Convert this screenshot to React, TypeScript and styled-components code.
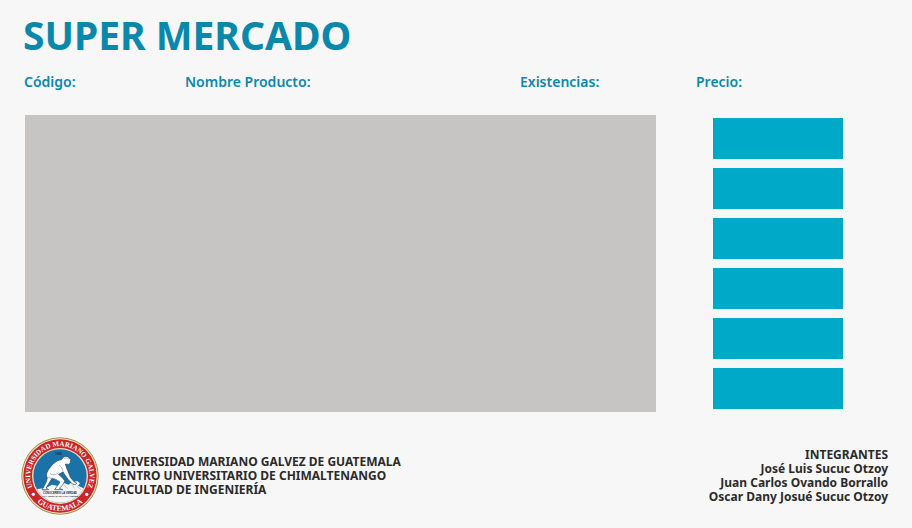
import React from "react";
import styled, { createGlobalStyle } from "styled-components";

const GlobalStyle = createGlobalStyle`
  * { box-sizing: border-box; }
  body {
    margin: 0;
    background: #f7f7f7;
    font-family: "Noto Sans", "Open Sans", sans-serif;
  }
`;

const Page = styled.div`
  display: flex;
  flex-direction: column;
  min-height: 100vh;
  padding: 12px 24px 12px;
`;

const Title = styled.h1`
  margin: 0 0 0 -1px;
  font-size: 39px;
  line-height: 46px;
  font-weight: 700;
  color: #0a88ac;
`;

const Fields = styled.form`
  display: grid;
  grid-template-columns: minmax(0, 161fr) minmax(0, 335fr) minmax(0, 176fr) minmax(0, 192fr);
  margin-top: 14px;
`;

const Field = styled.div`
  display: flex;
  align-items: center;
  gap: 8px;
  min-width: 0;
`;

const FieldLabel = styled.label`
  flex: none;
  font-size: 14px;
  line-height: 20px;
  font-weight: 600;
  color: #0a88ac;
`;

const FieldInput = styled.input`
  flex: 1;
  min-width: 0;
  width: 0;
  height: 20px;
  padding: 0;
  border: 0;
  outline: 0;
  background: transparent;
  font: inherit;
  font-size: 14px;
  color: #2b2b2b;
`;

const Content = styled.main`
  display: flex;
  flex: 1;
  gap: 57px;
  margin-top: 23px;
  padding: 0 45px 0 1px;
`;

const ProductPanel = styled.section`
  flex: 1;
  min-height: 240px;
  background: #c6c5c3;
`;

const Actions = styled.div`
  display: grid;
  grid-auto-rows: 1fr;
  gap: 9px;
  flex: 0 0 130px;
  padding: 3px 0;
`;

const ActionButton = styled.button`
  padding: 0;
  border: 0;
  background: #00a9c8;
  cursor: pointer;
`;

const Footer = styled.footer`
  display: flex;
  align-items: center;
  margin-top: 24px;
`;

const Seal = styled.svg`
  display: block;
  flex: none;
  width: 80px;
  height: 80px;
  margin: 0 12px 0 -4px;
`;

const Institution = styled.address`
  font-style: normal;
  font-size: 12px;
  line-height: 14px;
  font-weight: 700;
  color: #2b2b2b;
`;

const Members = styled(Institution)`
  margin-left: auto;
  text-align: right;
`;

const Line = styled.div``;

const fields = [
  { id: "codigo", label: "Código:" },
  { id: "nombre", label: "Nombre Producto:" },
  { id: "existencias", label: "Existencias:" },
  { id: "precio", label: "Precio:" },
];

const actions = [1, 2, 3, 4, 5, 6];

const institution = [
  "UNIVERSIDAD MARIANO GALVEZ DE GUATEMALA",
  "CENTRO UNIVERSITARIO DE CHIMALTENANGO",
  "FACULTAD DE INGENIERÍA",
];

const members = [
  "INTEGRANTES",
  "José Luis Sucuc Otzoy",
  "Juan Carlos Ovando Borrallo",
  "Oscar Dany Josué Sucuc Otzoy",
];

function UniversitySeal() {
  return (
    <Seal viewBox="-120 -120 240 240" role="img" aria-label="Universidad Mariano Galvez">
      <defs>
        <path id="seal-top" d="M -67 58 A 89 89 0 1 1 67 58" />
        <path id="seal-bottom" d="M -89 54 A 104 104 0 0 0 89 54" />
        <clipPath id="seal-disc">
          <circle r="80" />
        </clipPath>
      </defs>
      <circle r="116" fill="#a98f4c" />
      <circle r="113" fill="#f4e6c8" />
      <circle r="110" fill="#cb2429" />
      <circle r="84" fill="#f3dfc0" />
      <circle r="80" fill="#1b72a8" />
      <g clipPath="url(#seal-disc)">
        <path
          d="M -82 44 L -62 38 L -42 36 L -24 26 L -6 30 L 10 20 L 25 26 L 38 18 L 52 15 L 60 22 L 54 29 L 74 38 L 82 50 L 70 90 L -70 90 Z"
          fill="#f5f5f3"
        />
        <path
          d="M -54 41 L -40 45 M 12 28 L 23 38 M 36 27 L 45 38 M 51 31 L 63 41"
          stroke="#9fb2bd"
          strokeWidth="2"
        />
      </g>
      <path
        d="M 8 -53 C 12 -61 26 -61 30 -51 L 36 -49 L 31 -46 C 33 -39 28 -34 21 -35 L 16 -36 L 20 -24 L 26 -9 L 32 5 L 42 17 L 50 21 L 47 26 L 37 24 L 25 11 L 15 -3 L 9 -12 L -4 -5 L 8 7 L 15 15 L 6 29 L -2 37 L 8 41 L -16 41 L -11 34 L 0 18 L -14 10 L -24 7 L -32 20 L -42 36 L -34 41 L -54 41 L -49 33 L -41 17 L -38 5 C -44 -4 -38 -14 -31 -24 C -21 -38 -8 -48 4 -49 Z"
        fill="#ffffff"
        stroke="#17435f"
        strokeWidth="2"
        strokeLinejoin="round"
      />
      <path
        d="M -30 -8 C -21 0 -12 -4 -4 -10 M 12 -51 C 16 -56 24 -55 27 -50 M -35 5 L -20 7 L 0 17 M -2 -32 C 4 -28 8 -22 9 -13"
        fill="none"
        stroke="#8195a2"
        strokeWidth="2"
      />
      <g fontFamily="Liberation Serif, serif" fontWeight="700" fill="#ffffff" textAnchor="middle">
        <text fontSize="21">
          <textPath href="#seal-top" startOffset="50%">UNIVERSIDAD MARIANO GALVEZ</textPath>
        </text>
        <text fontSize="23">
          <textPath href="#seal-bottom" startOffset="50%">GUATEMALA</textPath>
        </text>
      </g>
      <g fontFamily="Liberation Sans, sans-serif" fontWeight="700" fill="#1d2d38" textAnchor="middle">
        <text y="-62" x="-4" fontSize="9">1966</text>
        <text y="53" fontSize="8">CONOCEREIS LA VERDAD</text>
        <text y="64" fontSize="7">Y LA VERDAD OS HARA LIBRES</text>
      </g>
      <circle cx="-80" cy="55" r="5" fill="#ffffff" />
      <circle cx="80" cy="55" r="5" fill="#ffffff" />
    </Seal>
  );
}

export default function App() {
  return (
    <>
      <GlobalStyle />
      <Page>
        <Title>SUPER MERCADO</Title>
        <Fields>
          {fields.map((field) => (
            <Field key={field.id}>
              <FieldLabel htmlFor={field.id}>{field.label}</FieldLabel>
              <FieldInput id={field.id} type="text" />
            </Field>
          ))}
        </Fields>
        <Content>
          <ProductPanel aria-label="Productos" />
          <Actions>
            {actions.map((action) => (
              <ActionButton key={action} type="button" aria-label={`Acción ${action}`} />
            ))}
          </Actions>
        </Content>
        <Footer>
          <UniversitySeal />
          <Institution>
            {institution.map((line) => (
              <Line key={line}>{line}</Line>
            ))}
          </Institution>
          <Members>
            {members.map((line) => (
              <Line key={line}>{line}</Line>
            ))}
          </Members>
        </Footer>
      </Page>
    </>
  );
}
